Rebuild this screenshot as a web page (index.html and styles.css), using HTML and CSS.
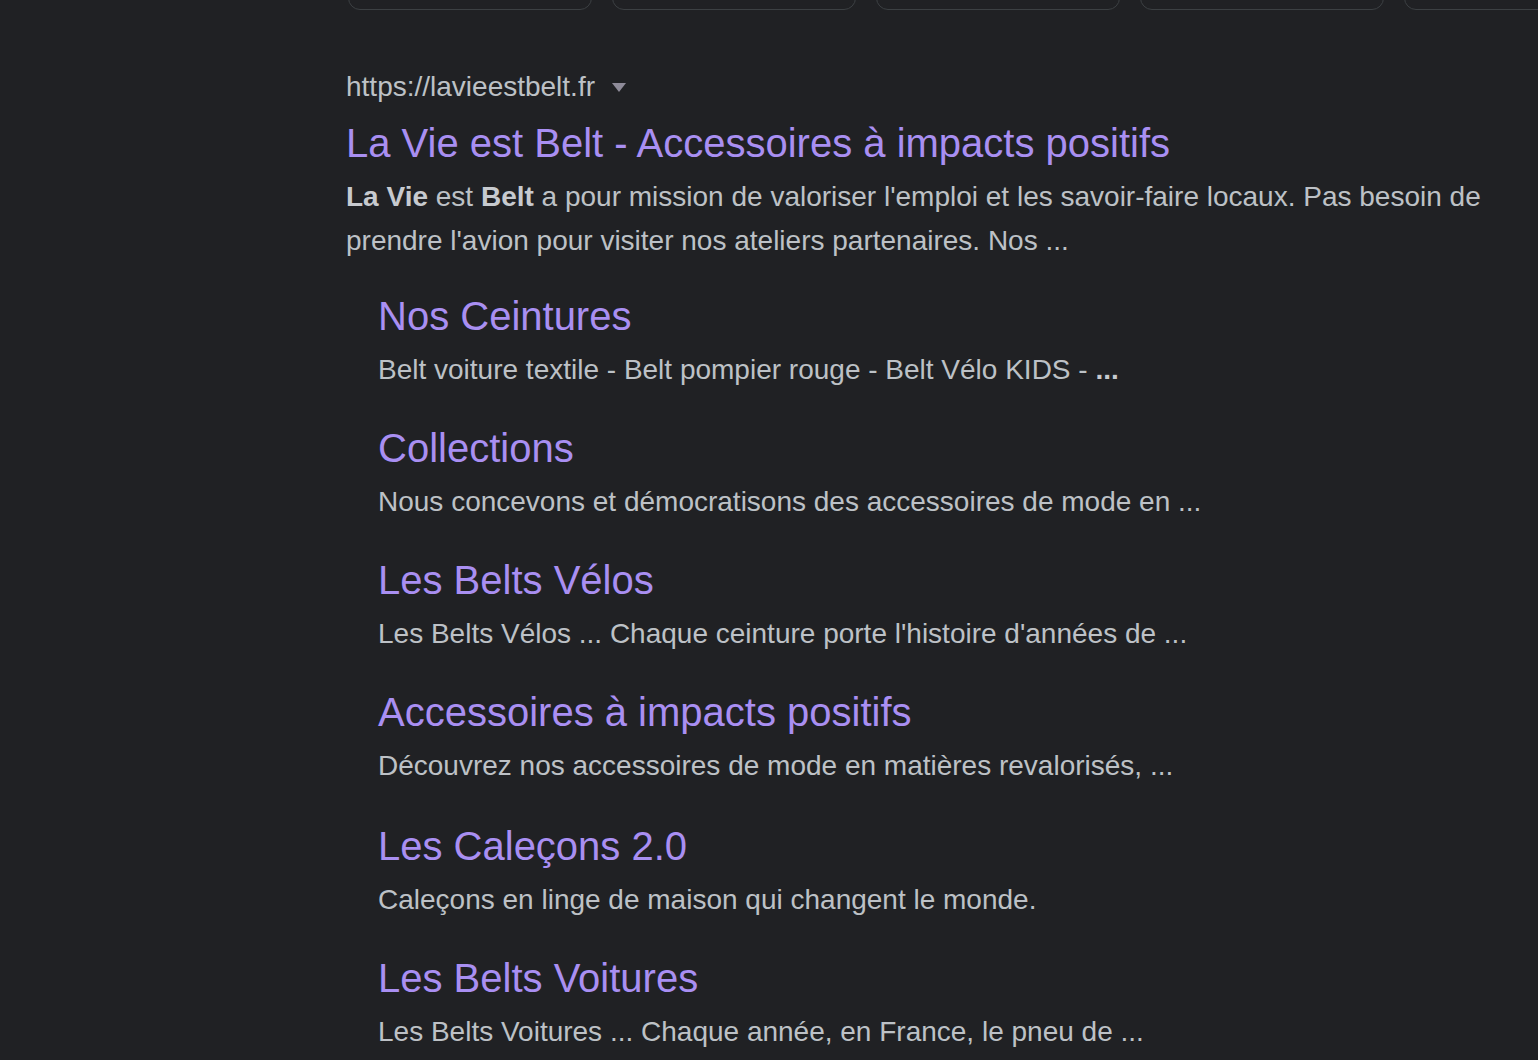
FILE: index.html
```html
<!DOCTYPE html>
<html lang="fr">
<head>
<meta charset="utf-8">
<title>La Vie est Belt</title>
<link rel="stylesheet" href="styles.css">
</head>
<body>
<div class="page">
  <div class="chips">
    <div class="chip"></div>
    <div class="chip"></div>
    <div class="chip"></div>
    <div class="chip"></div>
    <div class="chip"></div>
  </div>
  <div class="result">
    <div class="url"><span>https://lavieestbelt.fr</span><span class="arrow"></span></div>
    <h3 class="title">La Vie est Belt - Accessoires à impacts positifs</h3>
    <div class="snippet"><b>La Vie</b> est <b>Belt</b> a pour mission de valoriser l'emploi et les savoir-faire locaux. Pas besoin de prendre l'avion pour visiter nos ateliers partenaires. Nos ...</div>
    <div class="sitelinks">
      <div class="sitelink">
        <h3 class="sl-title">Nos Ceintures</h3>
        <div class="sl-snippet">Belt voiture textile - Belt pompier rouge - Belt Vélo KIDS - <b>...</b></div>
      </div>
      <div class="sitelink">
        <h3 class="sl-title">Collections</h3>
        <div class="sl-snippet">Nous concevons et démocratisons des accessoires de mode en ...</div>
      </div>
      <div class="sitelink">
        <h3 class="sl-title">Les Belts Vélos</h3>
        <div class="sl-snippet">Les Belts Vélos ... Chaque ceinture porte l'histoire d'années de ...</div>
      </div>
      <div class="sitelink">
        <h3 class="sl-title">Accessoires à impacts positifs</h3>
        <div class="sl-snippet">Découvrez nos accessoires de mode en matières revalorisés, ...</div>
      </div>
      <div class="sitelink sitelink-lower">
        <h3 class="sl-title">Les Caleçons 2.0</h3>
        <div class="sl-snippet">Caleçons en linge de maison qui changent le monde.</div>
      </div>
      <div class="sitelink">
        <h3 class="sl-title">Les Belts Voitures</h3>
        <div class="sl-snippet">Les Belts Voitures ... Chaque année, en France, le pneu de ...</div>
      </div>
    </div>
  </div>
</div>
</body>
</html>
```

FILE: styles.css
```css
html, body {
  margin: 0;
  padding: 0;
  background: #202124;
}
body {
  font-family: "Liberation Sans", Arial, sans-serif;
  color: #bdc1c6;
  overflow: hidden;
  height: 1060px;
}
.page {
  padding-left: 346px;
}
.chips {
  display: flex;
  gap: 20px;
  height: 10px;
  overflow: hidden;
  align-items: flex-end;
  padding-left: 2px;
}
.chip {
  flex: none;
  width: 244px;
  height: 40px;
  box-sizing: border-box;
  border: 1px solid #3c4043;
  border-radius: 12px;
}
.result {
  margin-top: 55px;
  max-width: 1180px;
}
.url {
  display: flex;
  align-items: center;
  font-size: 28px;
  line-height: 44px;
  color: #bdc1c6;
}
.arrow {
  width: 0;
  height: 0;
  margin-left: 17px;
  margin-top: 1px;
  border-left: 7.5px solid transparent;
  border-right: 7.5px solid transparent;
  border-top: 9px solid #8e8b99;
}
.title, .sl-title {
  margin: 0;
  font-weight: normal;
  font-size: 40px;
  line-height: 52px;
  color: #a98ff2;
}
.title {
  margin-top: 8px;
}
.snippet, .sl-snippet {
  font-size: 28px;
  line-height: 44px;
  margin-top: 6px;
  color: #bdc1c6;
}
.snippet b, .sl-snippet b {
  color: #c7cacf;
}
.sitelinks {
  margin-top: 27px;
  padding-left: 32px;
  display: flex;
  flex-direction: column;
  gap: 30px;
}
.sitelink-lower {
  margin-top: 2px;
}
```
